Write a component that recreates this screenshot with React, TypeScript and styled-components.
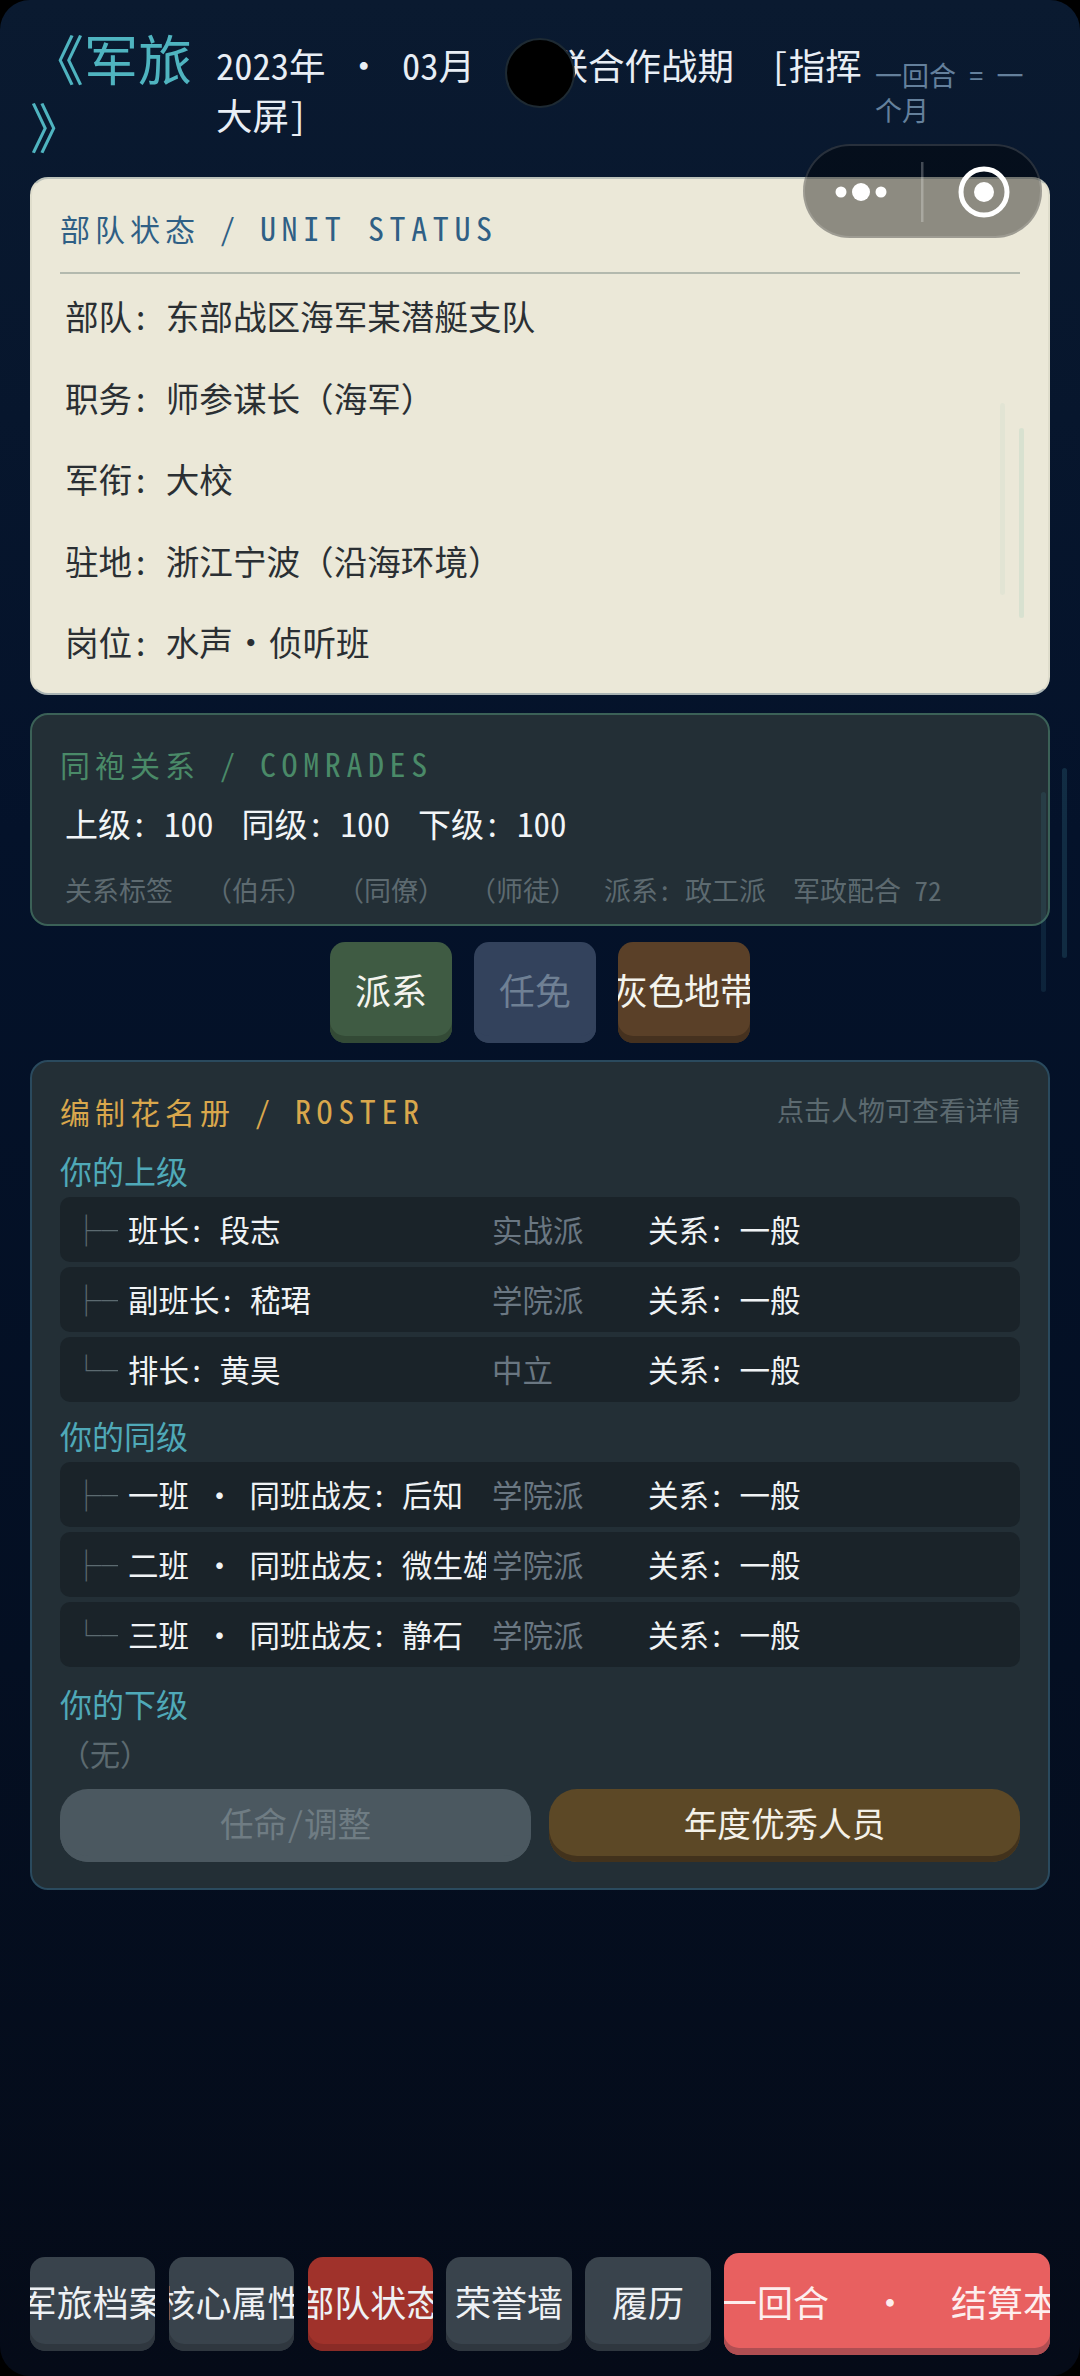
import styled, { createGlobalStyle } from 'styled-components'

interface Member {
  branch: string
  name: React.ReactNode
  faction: string
}

const GlobalStyle = createGlobalStyle`
  html, body {
    margin: 0;
    padding: 0;
    background: #000;
  }
  * {
    box-sizing: border-box;
  }
`

const Dot = styled.span<{ $w?: number }>`
  display: inline-block;
  width: ${(p) => p.$w ?? 40}px;
  text-align: center;
`

const units = [
  ['部队', '东部战区海军某潜艇支队'],
  ['职务', '师参谋长（海军）'],
  ['军衔', '大校'],
  ['驻地', '浙江宁波（沿海环境）'],
]

const mates = (title: string, name: string) => (
  <>
    {title} <Dot $w={30}>·</Dot> 同班战友: {name}
  </>
)

const superiors: Member[] = [
  { branch: '├─', name: '班长: 段志', faction: '实战派' },
  { branch: '├─', name: '副班长: 嵇珺', faction: '学院派' },
  { branch: '└─', name: '排长: 黄昊', faction: '中立' },
]

const peers: Member[] = [
  { branch: '├─', name: mates('一班', '后知'), faction: '学院派' },
  { branch: '├─', name: mates('二班', '微生雄'), faction: '学院派' },
  { branch: '└─', name: mates('三班', '静石'), faction: '学院派' },
]

const navItems = ['军旅档案', '核心属性', '部队状态', '荣誉墙', '履历']

const MemberRows = ({ members }: { members: Member[] }) => (
  <Rows>
    {members.map((m, i) => (
      <MemberRow key={i}>
        <Branch>{m.branch}</Branch>
        <MemberName>{m.name}</MemberName>
        <Faction>{m.faction}</Faction>
        <Relation>关系: 一般</Relation>
      </MemberRow>
    ))}
  </Rows>
)

export default function App() {
  return (
    <Page>
      <GlobalStyle />
      <Header>
        <Title>《军旅》</Title>
        <Period>
          2023年 <Dot>·</Dot> 03月 <Dot>·</Dot> 联合作战期{'  '}[指挥大屏]
        </Period>
        <TurnHint>一回合 = 一个月</TurnHint>
      </Header>

      <Main>
        <StatusCard>
          <StatusHeading>
            部队状态 / <Latin>UNIT STATUS</Latin>
          </StatusHeading>
          {units.map(([k, v]) => (
            <StatusRow key={k}>
              {k}: {v}
            </StatusRow>
          ))}
          <StatusRow>
            岗位: 水声<SmallDot>·</SmallDot>侦听班
          </StatusRow>
        </StatusCard>

        <ComradeCard>
          <Heading $color="#4a8a68">
            同袍关系 / <Latin>COMRADES</Latin>
          </Heading>
          <Stats>
            <span>上级: 100</span>
            <span>同级: 100</span>
            <span>下级: 100</span>
          </Stats>
          <Tags>
            <span>关系标签</span>
            <span>（伯乐）</span>
            <span>（同僚）</span>
            <span>（师徒）</span>
            <span>派系: 政工派</span>
            <span>军政配合 72</span>
          </Tags>
        </ComradeCard>

        <TabRow>
          <TabButton $bg="#3f5b43" $edge="#334a36" $w={122}>
            <span>派系</span>
          </TabButton>
          <TabButton $bg="#33425c" $edge="#33425c" $color="#6f8094" $w={122}>
            <span>任免</span>
          </TabButton>
          <TabButton $bg="#5a4028" $edge="#45311f" $w={132}>
            <span>灰色地带</span>
          </TabButton>
        </TabRow>

        <RosterCard>
          <RosterHead>
            <Heading $color="#d9a74c">
              编制花名册 / <Latin>ROSTER</Latin>
            </Heading>
            <Hint>点击人物可查看详情</Hint>
          </RosterHead>
          <GroupTitle>你的上级</GroupTitle>
          <MemberRows members={superiors} />
          <GroupTitle $top={11}>你的同级</GroupTitle>
          <MemberRows members={peers} />
          <GroupTitle $top={14}>你的下级</GroupTitle>
          <Empty>（无）</Empty>
          <Actions>
            <ActionButton $bg="#4b5860" $edge="#4b5860" $color="#6f7c83">
              任命/调整
            </ActionButton>
            <ActionButton $bg="#5c4826" $edge="#42321c" $color="#f4f1e8">
              年度优秀人员
            </ActionButton>
          </Actions>
        </RosterCard>
      </Main>

      <Nav>
        {navItems.map((item) => (
          <NavButton key={item} $active={item === '部队状态'}>
            <span>{item}</span>
          </NavButton>
        ))}
        <EndTurn>
          <span>
            下一回合<Dot $w={122}>·</Dot>结算本月
          </span>
        </EndTurn>
      </Nav>

      <Streak $x={1000} $y={403} $h={192} $color="rgba(120, 190, 170, 0.07)" />
      <Streak $x={1019} $y={428} $h={190} $color="rgba(120, 190, 170, 0.16)" />
      <Streak $x={1041} $y={792} $h={200} $color="rgba(70, 150, 170, 0.14)" />
      <Streak $x={1062} $y={768} $h={190} $color="rgba(70, 150, 170, 0.2)" />

      <Camera />
      <Capsule>
        <svg width="239" height="94" viewBox="0 0 239 94">
          <circle cx="38" cy="48" r="5.5" fill="#fff" />
          <circle cx="58" cy="48" r="9" fill="#fff" />
          <circle cx="78" cy="48" r="5.5" fill="#fff" />
          <rect x="118" y="18" width="2.5" height="60" fill="rgba(255,255,255,0.25)" />
          <circle cx="181" cy="48" r="23" fill="none" stroke="#fff" strokeWidth="5" />
          <circle cx="181" cy="48" r="10" fill="#fff" />
        </svg>
      </Capsule>
    </Page>
  )
}

const Page = styled.div`
  position: relative;
  display: flex;
  flex-direction: column;
  width: 1080px;
  height: 2376px;
  overflow: hidden;
  border-radius: 30px;
  background: linear-gradient(180deg, #0a1a30 0%, #04122a 35%, #040f22 70%, #050b18 100%);
  font-family: 'Noto Sans Mono CJK SC', 'Noto Sans CJK SC', 'DejaVu Sans Mono', monospace;
  color: #eef2f6;
`

const Header = styled.header`
  display: flex;
  align-items: center;
  height: 177px;
  padding: 24px 30px 17px;
`

const Title = styled.div`
  flex: none;
  width: 162px;
  margin-right: 24px;
  font-size: 54px;
  line-height: 68px;
  line-break: anywhere;
  color: #4fb4c0;
`

const Period = styled.div`
  flex: none;
  width: 650px;
  margin-top: -5px;
  font-size: 36.5px;
  line-height: 50px;
  white-space: pre-wrap;
  color: #e8eef5;
`

const TurnHint = styled.div`
  flex: none;
  width: 160px;
  margin-left: 9px;
  font-size: 27px;
  line-height: 35px;
  color: #64809c;
`

const Main = styled.main`
  display: flex;
  flex-direction: column;
  padding: 0 30px;
`

const Card = styled.section`
  border-radius: 18px;
  border: 2px solid;
  padding: 31px 28px;
`

const StatusCard = styled(Card)`
  height: 518px;
  background: #ebe8d8;
  border-color: #bcc2ba #dfddcc #aab4b4;
  color: #2a2f33;
`

const Heading = styled.h2<{ $color: string }>`
  margin: 0;
  font-size: 30px;
  font-weight: 400;
  line-height: 34px;
  letter-spacing: 5px;
  color: ${(p) => p.$color};
`

const Latin = styled.span`
  font-size: 32px;
  letter-spacing: 5.6px;
`

const StatusHeading = styled(Heading).attrs({ $color: '#2f5f85' })`
  padding-bottom: 27px;
  border-bottom: 2px solid #b3b9ae;
`

const StatusRow = styled.div`
  height: 81.5px;
  padding: 3px 0 0 5px;
  font-size: 33.6px;
  line-height: 78.5px;
`

const SmallDot = styled.span`
  display: inline-block;
  width: 36px;
  text-align: center;
`

const ComradeCard = styled(Card)`
  height: 213px;
  margin-top: 18px;
  background: #232f36;
  border-color: #3b6157;
`

const Stats = styled.div`
  display: flex;
  gap: 28px;
  margin-top: 20px;
  padding-left: 5px;
  font-size: 33px;
  line-height: 44px;
  color: #f2f5f7;
`

const Tags = styled.div`
  display: flex;
  gap: 24px;
  margin-top: 26px;
  padding-left: 5px;
  font-size: 27px;
  line-height: 38px;
  white-space: nowrap;
  color: #5d6a70;

  span:first-child {
    margin-right: 8px;
  }
  span:nth-child(n + 5) {
    margin-left: 3px;
  }
`

const TabRow = styled.div`
  display: flex;
  justify-content: center;
  gap: 22px;
  margin-top: 16px;
`

const TabButton = styled.button<{ $bg: string; $edge: string; $color?: string; $w: number }>`
  display: flex;
  align-items: center;
  justify-content: center;
  width: ${(p) => p.$w}px;
  height: 101px;
  padding: 0 0 7px;
  overflow: hidden;
  border: 0;
  border-radius: 15px;
  background: ${(p) => p.$bg};
  box-shadow: inset 0 -7px 0 ${(p) => p.$edge};
  font-family: inherit;
  font-size: 36px;
  white-space: nowrap;
  color: ${(p) => p.$color ?? '#f4f4ee'};

  span {
    flex: none;
  }
`

const RosterCard = styled(Card)`
  height: 830px;
  margin-top: 17px;
  padding-top: 31px;
  background: #232f36;
  border-color: #2a4a5e;
`

const RosterHead = styled.div`
  display: flex;
  align-items: center;
  justify-content: space-between;
  height: 34px;
`

const Hint = styled.span`
  font-size: 27px;
  line-height: 34px;
  color: #5c6a70;
`

const GroupTitle = styled.div<{ $top?: number }>`
  margin-top: ${(p) => p.$top ?? 21}px;
  font-size: 32px;
  line-height: 44px;
  color: #4fa9b8;
`

const Rows = styled.div`
  display: flex;
  flex-direction: column;
  gap: 4.5px;
  margin-top: 4.5px;
`

const MemberRow = styled.div`
  display: grid;
  grid-template-columns: 57px 358px 162px 1fr;
  align-items: center;
  height: 65.5px;
  padding-left: 11px;
  border-radius: 10px;
  background: #1a2329;
  font-size: 30.5px;
  white-space: nowrap;
`

const Branch = styled.span`
  display: block;
  width: 47px;
  overflow: hidden;
  color: #5c6a70;
`

const MemberName = styled.span`
  overflow: hidden;
  color: #f0f3f5;
`

const Faction = styled.span`
  padding-left: 6px;
  color: #6a7782;
`

const Relation = styled.span`
  color: #f0f3f5;
`

const Empty = styled.div`
  margin-top: 5.5px;
  font-size: 30px;
  line-height: 44px;
  color: #5c6a70;
`

const Actions = styled.div`
  display: grid;
  grid-template-columns: 1fr 1fr;
  gap: 18px;
  margin-top: 14.5px;
`

const ActionButton = styled.button<{ $bg: string; $edge: string; $color: string }>`
  height: 73px;
  padding: 0 0 6px;
  border: 0;
  border-radius: 28px;
  background: ${(p) => p.$bg};
  box-shadow: inset 0 -6px 0 ${(p) => p.$edge};
  font-family: inherit;
  font-size: 33.6px;
  color: ${(p) => p.$color};
`

const Nav = styled.nav`
  display: flex;
  align-items: center;
  gap: 13.4px;
  margin-top: auto;
  padding: 0 30px 21px;
`

const NavButton = styled.button<{ $active?: boolean }>`
  display: flex;
  flex: 1;
  align-items: center;
  justify-content: center;
  min-width: 0;
  height: 94px;
  padding: 0 0 7px;
  overflow: hidden;
  border: 0;
  border-radius: 15px;
  background: ${(p) => (p.$active ? '#a0322b' : '#39434c')};
  box-shadow: inset 0 -7px 0 ${(p) => (p.$active ? '#8a2b26' : '#2f373f')};
  font-family: inherit;
  font-size: 36px;
  white-space: nowrap;
  color: #eef1f4;

  span {
    flex: none;
  }
`

const EndTurn = styled(NavButton)`
  flex: none;
  width: 326px;
  height: 102px;
  padding-left: 6px;
  background: #e86060;
  box-shadow: inset 0 -7px 0 #b04e52;
  color: #fdeeee;
`

const Streak = styled.div<{ $x: number; $y: number; $h: number; $color: string }>`
  position: absolute;
  left: ${(p) => p.$x}px;
  top: ${(p) => p.$y}px;
  width: 5px;
  height: ${(p) => p.$h}px;
  border-radius: 3px;
  background: ${(p) => p.$color};
`

const Camera = styled.div`
  position: absolute;
  left: 505px;
  top: 38px;
  width: 70px;
  height: 70px;
  border-radius: 50%;
  background: #000;
  border: 2px solid #1e2a33;
`

const Capsule = styled.div`
  position: absolute;
  left: 803px;
  top: 144px;
  width: 239px;
  height: 94px;
  border-radius: 47px;
  background: rgba(0, 0, 0, 0.4);
  box-shadow: inset 0 0 0 2px rgba(255, 255, 255, 0.14);

  svg {
    display: block;
  }
`
